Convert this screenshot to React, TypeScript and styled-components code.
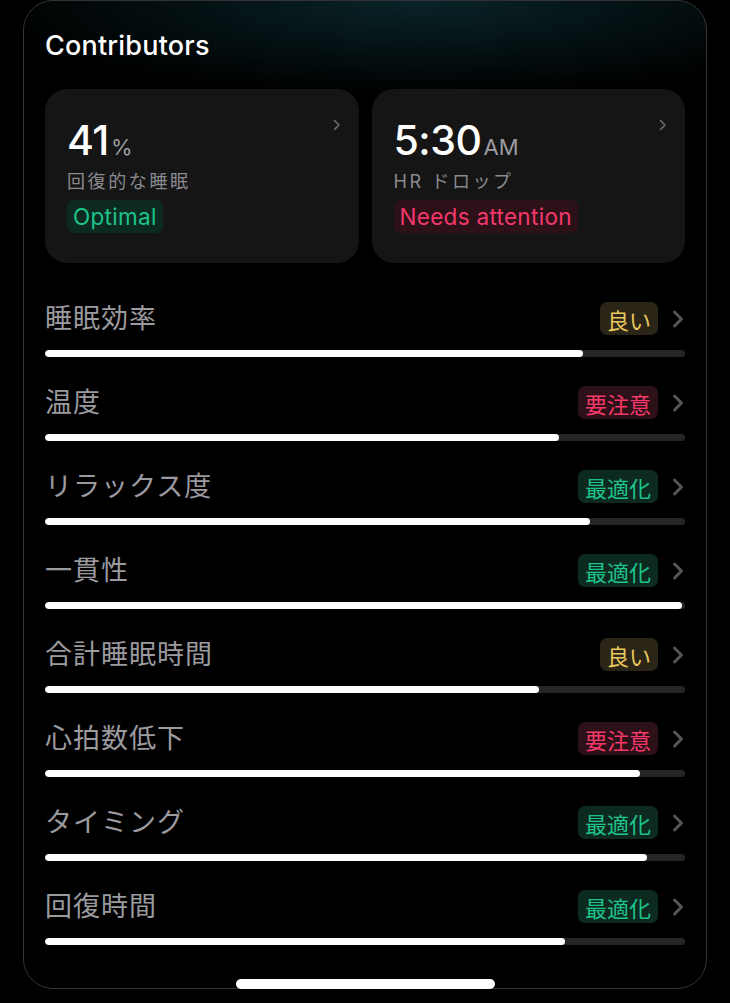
import React from "react";
import styled, { createGlobalStyle } from "styled-components";

const Global = createGlobalStyle`
  html, body { margin: 0; padding: 0; background: #000; }
  body { font-family: Inter, "Noto Sans CJK JP", "Noto Sans", sans-serif; -webkit-font-smoothing: antialiased; }
`;

const Page = styled.div`
  width: 730px;
  height: 1003px;
  background: #000;
  padding: 0 23px 0 23px;
  box-sizing: border-box;
`;

const Frame = styled.div`
  position: relative;
  height: 989px;
  box-sizing: border-box;
  border: 1.5px solid #333336;
  border-radius: 30px;
  background:
    radial-gradient(ellipse 440px 95px at 58% 0%, rgba(12, 44, 50, 0.8), rgba(0, 0, 0, 0) 100%),
    #000;
  padding: 26px 21px 0 21px;
  display: flex;
  flex-direction: column;
`;

const Title = styled.h1`
  margin: 0;
  font-size: 27px;
  line-height: 37px;
  font-weight: 500;
  color: #fff;
  letter-spacing: 0.2px;
`;

const Cards = styled.div`
  display: grid;
  grid-template-columns: 1fr 1fr;
  gap: 13px;
  margin-top: 25px;
`;

const Card = styled.div`
  position: relative;
  height: 174px;
  background: #151515;
  border-radius: 22px;
  padding: 29px 22px 0 22px;
  box-sizing: border-box;
  display: flex;
  flex-direction: column;
  align-items: flex-start;
`;

const CardChevron = styled.svg`
  position: absolute;
  top: 30px;
  right: 18px;
`;

const Value = styled.div`
  display: flex;
  align-items: baseline;
  gap: 2px;
  color: #fff;
  font-size: 41px;
  line-height: 44px;
  font-weight: 500;
  letter-spacing: -0.5px;
`;

const Unit = styled.span`
  font-size: 22px;
  color: #9b9ba0;
  font-weight: 400;
  letter-spacing: 0;
`;

const CardSub = styled.div`
  font-size: 18px;
  line-height: 26px;
  color: #8a8a8f;
  letter-spacing: 2.6px;
`;

type Tone = "green" | "red" | "yellow";

const toneText: Record<Tone, string> = {
  green: "#1dc38a",
  red: "#f5386b",
  yellow: "#e9c85c",
};
const toneBg: Record<Tone, string> = {
  green: "#0d2a20",
  red: "#2c1118",
  yellow: "#2a2517",
};

const Badge = styled.span<{ $tone: Tone }>`
  display: inline-flex;
  align-items: center;
  height: 33px;
  padding: 0 7px;
  border-radius: 7px;
  font-size: 22px;
  color: ${(p) => toneText[p.$tone]};
  background: ${(p) => toneBg[p.$tone]};
  box-sizing: border-box;
`;

const CardBadge = styled(Badge)`
  margin-top: 5px;
  padding: 0 6px;
  font-size: 22.5px;
  letter-spacing: 0.3px;
`;

const List = styled.div`
  display: flex;
  flex-direction: column;
  margin-top: 39px;
  gap: 29px;
`;

const Row = styled.div`
  display: flex;
  flex-direction: column;
  gap: 15px;
`;

const RowHead = styled.div`
  display: flex;
  align-items: center;
  height: 33px;
`;

const Label = styled.div`
  flex: 1;
  font-size: 27px;
  color: #9a9a9f;
  letter-spacing: 1px;
  line-height: 33px;
`;

const Chevron = styled.svg`
  margin-left: 13px;
  flex: none;
`;

const Track = styled.div`
  height: 7px;
  border-radius: 4px;
  background: #262628;
  overflow: hidden;
`;

const Fill = styled.div`
  height: 100%;
  border-radius: 4px;
  background: #fff;
`;

const HomeBar = styled.div`
  position: absolute;
  left: 212px;
  bottom: -1px;
  width: 259px;
  height: 10px;
  border-radius: 5px;
  background: #fff;
`;

const rows: { label: string; badge: string; tone: Tone; value: number }[] = [
  { label: "睡眠効率", badge: "良い", tone: "yellow", value: 0.84 },
  { label: "温度", badge: "要注意", tone: "red", value: 0.803 },
  { label: "リラックス度", badge: "最適化", tone: "green", value: 0.851 },
  { label: "一貫性", badge: "最適化", tone: "green", value: 0.995 },
  { label: "合計睡眠時間", badge: "良い", tone: "yellow", value: 0.772 },
  { label: "心拍数低下", badge: "要注意", tone: "red", value: 0.93 },
  { label: "タイミング", badge: "最適化", tone: "green", value: 0.94 },
  { label: "回復時間", badge: "最適化", tone: "green", value: 0.812 },
];

const SmallChevron = () => (
  <CardChevron width="8" height="12" viewBox="0 0 8 12">
    <path d="M1.5 1.5 L6 6 L1.5 10.5" fill="none" stroke="#6c6c70" strokeWidth="1.6" strokeLinecap="round" strokeLinejoin="round" />
  </CardChevron>
);

export default function App() {
  return (
    <Page>
      <Global />
      <Frame>
        <Title>Contributors</Title>
        <Cards>
          <Card>
            <SmallChevron />
            <Value>
              41<Unit>%</Unit>
            </Value>
            <CardSub>回復的な睡眠</CardSub>
            <CardBadge $tone="green">Optimal</CardBadge>
          </Card>
          <Card>
            <SmallChevron />
            <Value>
              5:30<Unit>AM</Unit>
            </Value>
            <CardSub>HR ドロップ</CardSub>
            <CardBadge $tone="red">Needs attention</CardBadge>
          </Card>
        </Cards>
        <List>
          {rows.map((r) => (
            <Row key={r.label}>
              <RowHead>
                <Label>{r.label}</Label>
                <Badge $tone={r.tone}>{r.badge}</Badge>
                <Chevron width="14" height="20" viewBox="0 0 14 20">
                  <path d="M3.5 3 L10.5 10 L3.5 17" fill="none" stroke="#56565a" strokeWidth="3" strokeLinecap="round" strokeLinejoin="round" />
                </Chevron>
              </RowHead>
              <Track>
                <Fill style={{ width: `${r.value * 100}%` }} />
              </Track>
            </Row>
          ))}
        </List>
        <HomeBar />
      </Frame>
    </Page>
  );
}
